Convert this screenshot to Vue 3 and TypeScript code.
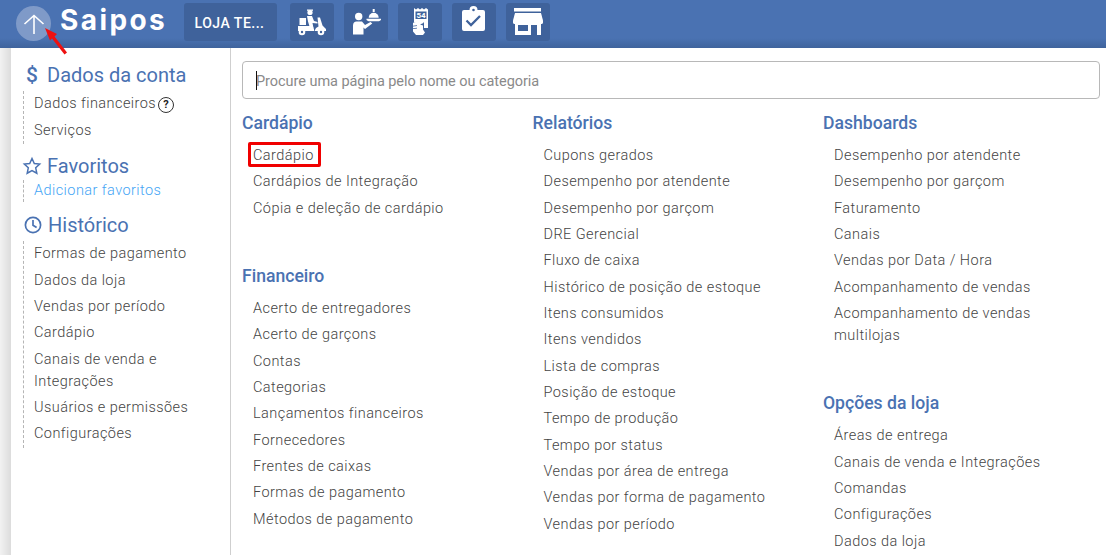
<script setup lang="ts">
interface Group { title: string; items: string[] }
const columns: Group[][] = [
  [
    { title: 'Cardápio', items: ['Cardápio', 'Cardápios de Integração', 'Cópia e deleção de cardápio'] },
    { title: 'Financeiro', items: ['Acerto de entregadores', 'Acerto de garçons', 'Contas', 'Categorias', 'Lançamentos financeiros', 'Fornecedores', 'Frentes de caixas', 'Formas de pagamento', 'Métodos de pagamento'] },
  ],
  [
    { title: 'Relatórios', items: ['Cupons gerados', 'Desempenho por atendente', 'Desempenho por garçom', 'DRE Gerencial', 'Fluxo de caixa', 'Histórico de posição de estoque', 'Itens consumidos', 'Itens vendidos', 'Lista de compras', 'Posição de estoque', 'Tempo de produção', 'Tempo por status', 'Vendas por área de entrega', 'Vendas por forma de pagamento', 'Vendas por período'] },
  ],
  [
    { title: 'Dashboards', items: ['Desempenho por atendente', 'Desempenho por garçom', 'Faturamento', 'Canais', 'Vendas por Data / Hora', 'Acompanhamento de vendas', 'Acompanhamento de vendas multilojas'] },
    { title: 'Opções da loja', items: ['Áreas de entrega', 'Canais de venda e Integrações', 'Comandas', 'Configurações', 'Dados da loja'] },
  ],
]
const history: string[] = ['Formas de pagamento', 'Dados da loja', 'Vendas por período', 'Cardápio', 'Canais de venda e Integrações', 'Usuários e permissões', 'Configurações']
</script>

<template>
  <div class="page">
    <header class="topbar">
      <button class="back" aria-label="Voltar">
        <svg width="34" height="34" viewBox="0 0 34 34" fill="none" stroke="#fff" stroke-width="1.6">
          <path d="M17 27V8.500M7.500 17 17 8.500 26.500 17" />
        </svg>
      </button>
      <div class="logo">Saipos</div>
      <button class="store-btn">LOJA TE...</button>
      <div class="icons">
        <button class="icon-btn">
          <svg width="44" height="38" viewBox="0 0 44 38">
            <g fill="#fff">
              <rect x="9.500" y="15" width="6.500" height="7" />
              <circle cx="20" cy="9.500" r="2.600" />
              <path d="M17 6.500h6v1.300h-6z" />
              <path d="M17 13h5l2 5 3.500 1v1.500l-5-.5 1 5h-3.500l-2-6.500z" />
              <path d="M27.500 14.500h2.500l2.500 8 3.500 3.500v2H24.500l1.500-3 2.500-1.500z" />
              <path d="M8 23h14.500l1.500 3v2H8z" />
              <circle cx="12" cy="29" r="3.300" />
              <circle cx="31" cy="29" r="3.300" />
            </g>
            <circle cx="12" cy="29" r="1.200" fill="#3f629b" />
            <circle cx="31" cy="29" r="1.200" fill="#3f629b" />
          </svg>
        </button>
        <button class="icon-btn">
          <svg width="44" height="38" viewBox="0 0 44 38">
            <g fill="#fff">
              <circle cx="14.700" cy="13.500" r="3.700" />
              <path d="M9 31.500V22.500c0-2.500 1.500-4 3.500-4h5.500l3 3.500 5.500-3 1.800 1.500L21 26l-1.500-1.500v7z" />
              <path d="M22.500 15.700h14.500v1.300c-1 1-2 1.200-3 1.200h-8.500c-1 0-2-.2-3-1.200z" />
              <path d="M24.700 14.800a5 5 0 0 1 10 0z" />
              <rect x="28.700" y="6" width="2" height="3" />
            </g>
          </svg>
        </button>
        <button class="icon-btn">
          <svg width="44" height="38" viewBox="0 0 44 38">
            <path fill="#fff" d="M16 5l2 1.500 2-1.500 2 1.500 2-1.500 2 1.500 2-1.500 2 1.500V25h-4V19h-7l-3 .5z" />
            <rect x="17.500" y="8.500" width="11" height="7.500" fill="#3f629b" />
            <text x="23" y="15" text-anchor="middle" class="receipt-no">54</text>
            <path fill="#fff" d="M15 20c2-1.500 4-1 6-1h4l1 .8-4 1.700 3 1v4l2 3-2 2.500h-7l-3-3.500z" />
            <path fill="#3f629b" d="M15 22.800l4-.5v.8l-4 .5zM15 25.300l4-.5v.8l-4 .5z" />
          </svg>
        </button>
        <button class="icon-btn">
          <svg width="44" height="38" viewBox="0 0 44 38">
            <path fill="#fff" fill-rule="evenodd" d="M12 7h5.500a4 4 0 0 1 8 0H31a2 2 0 0 1 2 2v17a2 2 0 0 1-2 2H12a2 2 0 0 1-2-2V9a2 2 0 0 1 2-2zM21.500 5.700a1.300 1.300 0 1 0 0 2.600 1.300 1.300 0 0 0 0-2.600z" />
            <path fill="none" stroke="#3f629b" stroke-width="2.300" d="M14.500 17.500l4.500 4.500 9-9" />
          </svg>
        </button>
        <button class="icon-btn">
          <svg width="44" height="38" viewBox="0 0 44 38">
            <g fill="#fff">
              <rect x="8" y="5" width="27" height="3.500" />
              <path d="M9 10h26l2 7.500v2c0 1-1 1.500-2 1.500H9c-1 0-2-.5-2-1.500v-2z" />
              <path fill-rule="evenodd" d="M9 21h26v11H9zM12 22v6h10v-6zM25 22v10h6V22z" />
            </g>
          </svg>
        </button>
      </div>
    </header>

    <div class="body">
      <div class="gutter"></div>
      <aside class="sidebar">
        <h2 class="side-title">
          <span class="dollar">$</span>
          Dados da conta
        </h2>
        <ul class="side-list first">
          <li>Dados financeiros<span class="help">?</span></li>
          <li>Serviços</li>
        </ul>
        <h2 class="side-title fav">
          <svg class="t-icon" width="20" height="20" viewBox="0 0 20 20" fill="none" stroke="#4a72b2" stroke-width="1.500">
            <path d="M10 2.500l2.300 5 5.400.6-4 3.700 1.100 5.400-4.800-2.700-4.800 2.700 1.100-5.400-4-3.700 5.400-.6z" />
          </svg>
          Favoritos
        </h2>
        <ul class="side-list add">
          <li class="link">Adicionar favoritos</li>
        </ul>
        <h2 class="side-title hist">
          <svg class="t-icon" width="20" height="20" viewBox="0 0 20 20" fill="none" stroke="#4a72b2" stroke-width="1.700">
            <circle cx="10" cy="10" r="7.600" />
            <path d="M10 5v5.300l3.600 2.200" />
          </svg>
          Histórico
        </h2>
        <ul class="side-list last">
          <li v-for="h in history" :key="h">{{ h }}</li>
        </ul>
      </aside>

      <main class="content">
        <div class="search-wrap">
          <input class="search" type="text" placeholder="Procure uma página pelo nome ou categoria" />
        </div>
        <div class="cols">
          <div v-for="(col, ci) in columns" :key="ci" class="col">
            <section v-for="g in col" :key="g.title" class="group">
              <h3>{{ g.title }}</h3>
              <ul>
                <li v-for="(it, ii) in g.items" :key="it">
                  <span :class="{ mark: ci === 0 && g.title === 'Cardápio' && ii === 0 }">{{ it }}</span>
                </li>
              </ul>
            </section>
          </div>
        </div>
      </main>
    </div>

    <svg class="pointer" width="30" height="34" viewBox="0 0 30 34">
      <path d="M5 4 17 10 14.500 12.500 27 28.500 24.500 30.500 12 14.500 10 16.500z" fill="#ee1111" />
    </svg>
  </div>
</template>

<style>
html, body { margin: 0; overflow: hidden; background: #fff; }
</style>

<style scoped>
.page {
  position: relative;
  height: 555px;
  overflow: hidden;
  font-family: Roboto, "Liberation Sans", sans-serif;
  color: #555;
  background: #fff;
}
button { border: 0; padding: 0; margin: 0; font-family: inherit; cursor: pointer; }
ul { list-style: none; margin: 0; padding: 0; }
h2, h3 { margin: 0; }

.topbar {
  height: 48px;
  box-sizing: border-box;
  display: flex;
  align-items: flex-start;
  padding: 3px 0 0 16px;
  background: linear-gradient(#4a72b2 0, #4a72b2 38px, #3f639c 48px);
}
.back {
  width: 35px;
  height: 35px;
  margin-top: 3px;
  border-radius: 50%;
  background: #7f9ac8;
  display: flex;
  align-items: center;
  justify-content: center;
}
.logo {
  width: 133px;
  height: 38px;
  font-family: Inter, sans-serif;
  font-weight: 700;
  font-size: 28px;
  line-height: 34px;
  letter-spacing: 2.400px;
  color: #fff;
  padding-left: 9px;
  box-sizing: border-box;
}
.store-btn {
  width: 93px;
  height: 38px;
  background: #3f629b;
  color: #fff;
  border-radius: 3px;
  font-size: 14px;
  font-weight: 500;
  letter-spacing: 0.5px;
  padding: 1px 2px 0 0;
}
.icons { display: flex; gap: 10px; margin-left: 13px; }
.icon-btn {
  width: 44px;
  height: 38px;
  background: #3f629b;
  border-radius: 3px;
  display: block;
}
.icon-btn svg { display: block; }
.receipt-no { font: 700 8px Roboto, sans-serif; fill: #fff; }

.body { display: flex; height: 507px; }
.gutter {
  width: 11px;
  flex: none;
  background: linear-gradient(90deg, #f2f2f2, #dcdcdc);
}
.sidebar {
  width: 220px;
  flex: none;
  box-sizing: border-box;
  border-right: 1px solid #cfcfcf;
  padding: 14px 0 0 12px;
}
.side-title {
  display: flex;
  align-items: center;
  gap: 4px;
  font-size: 20px;
  font-weight: 400;
  color: #4a72b2;
  height: 26px;
  line-height: 26px;
}
.t-icon { flex: none; }
.dollar {
  flex: none;
  width: 20px;
  text-align: center;
  padding-right: 2px;
  box-sizing: border-box;
  font-size: 21px;
  font-weight: 500;
}
.fav { margin-top: 9px; }
.fav .t-icon { margin-left: -1px; margin-right: 1px; }
.hist { margin-top: 10px; }
.hist .t-icon { margin-right: 1px; }
.side-list {
  border-left: 1px dashed #b5b5b5;
  padding-left: 10px;
  font-size: 14.500px;
  font-weight: 300;
  letter-spacing: 0.440px;
  line-height: 22px;
  color: #444;
}
.side-list.first { margin-top: 3.200px; }
.side-list.add { margin-top: 1px; }
.side-list.last { margin-top: 3.600px; }
.side-list li { padding: 2px 0 2.330px; }
.side-list.add li { padding: 0; }
.link { color: #45a5f5; }
.help {
  display: inline-block;
  width: 16px;
  height: 16px;
  margin-left: 2px;
  line-height: 14px;
  box-sizing: border-box;
  border: 1px solid #333;
  border-radius: 50%;
  text-align: center;
  font-size: 11px;
  font-weight: 700;
  letter-spacing: 0;
  color: #222;
  vertical-align: 0;
}

.content { flex: 1; min-width: 0; padding: 13px 6px 0 11px; }
.search-wrap { position: relative; }
.search-wrap::before {
  content: "";
  position: absolute;
  left: 14px;
  top: 10px;
  width: 1px;
  height: 19px;
  background: #111;
}
.search {
  display: block;
  box-sizing: border-box;
  width: 100%;
  height: 38px;
  border: 1px solid #b8b8b8;
  border-radius: 4px;
  padding: 2px 13px 0;
  outline: none;
  font-family: inherit;
  font-size: 14.500px;
  font-weight: 400;
  letter-spacing: -0.050px;
}
.search::placeholder { color: #8a8a8a; opacity: 1; }
.cols { display: grid; grid-template-columns: repeat(3, 290.500px); margin-top: 12px; }
.group { margin-bottom: 39.800px; }
.group h3 {
  font-size: 17.600px;
  font-weight: 500;
  color: #4a72b2;
  line-height: 24px;
  height: 24px;
}
.group ul { margin-top: 10.100px; padding-left: 11px; padding-right: 30px; }
.group li {
  font-size: 14.500px;
  font-weight: 300;
  letter-spacing: 0.440px;
  line-height: 22px;
  padding-bottom: 4.330px;
  color: #444;
}
.mark { position: relative; display: inline-block; }
.mark::after {
  content: "";
  position: absolute;
  left: -5px;
  right: -7px;
  top: -3px;
  bottom: 0;
  border: 3px solid #f00000;
  border-radius: 2px;
  box-sizing: border-box;
}
.pointer { position: absolute; left: 40px; top: 24px; }
</style>
